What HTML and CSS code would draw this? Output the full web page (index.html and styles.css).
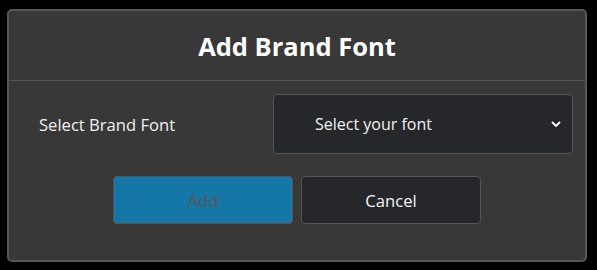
FILE: index.html
```html
<!DOCTYPE html>
<html lang="en">
<head>
    <meta charset="UTF-8">
    <meta name="viewport" content="width=device-width, initial-scale=1.0">
    <title>Add Brand Font</title>
    <link rel="stylesheet" href="styles.css">
</head>
<body>
    <div class="modal">
        <div class="modal-header">
            <h2>Add Brand Font</h2>
        </div>
        <div class="modal-body">
            <div class="form-row">
                <label class="form-label">Select Brand Font</label>
                <div class="font-select">
                    <span>Select your font</span>
                    <svg class="chevron" width="10" height="6" viewBox="0 0 10 6">
                        <path d="M1 1 L5 5 L9 1" fill="none" stroke="#fff" stroke-width="1.8"/>
                    </svg>
                </div>
            </div>
            <div class="actions">
                <button class="btn btn-primary" disabled>Add</button>
                <button class="btn btn-dark">Cancel</button>
            </div>
        </div>
    </div>
</body>
</html>
```

FILE: styles.css
```css
body { margin: 0; background: #000; font-family: "Open Sans", "Liberation Sans", sans-serif; }
.modal { width: 576px; margin: 9px 0 0 7px; background: #383838; border: 2px solid #565656; border-radius: 5px; }
.modal-header { height: 69px; display: flex; align-items: center; justify-content: center; border-bottom: 1px solid #565656; }
.modal-header h2 { margin: 0; font-size: 25.5px; font-weight: 700; color: #fff; }
.modal-body { padding: 13px 12px 36px 30px; }
.form-row { display: flex; align-items: center; }
.form-label { width: 234px; font-size: 16.6px; color: #f2f2f2; }
.font-select { flex: 1; height: 58px; display: flex; align-items: center; justify-content: space-between; padding: 0 11px 0 41px; background: #25272b; border: 1px solid #555; border-radius: 5px; color: #f2f2f2; font-size: 16px; }
.chevron { display: block; }
.actions { display: flex; justify-content: center; gap: 8px; margin-top: 22px; margin-left: -18px; }
.btn { width: 180px; height: 48px; border-radius: 4px; font-family: inherit; font-size: 16.6px; border: 1px solid #555; }
.btn-primary { background: #1577a8; color: #555; }
.btn-dark { background: #25272b; color: #f5f5f5; }
```
